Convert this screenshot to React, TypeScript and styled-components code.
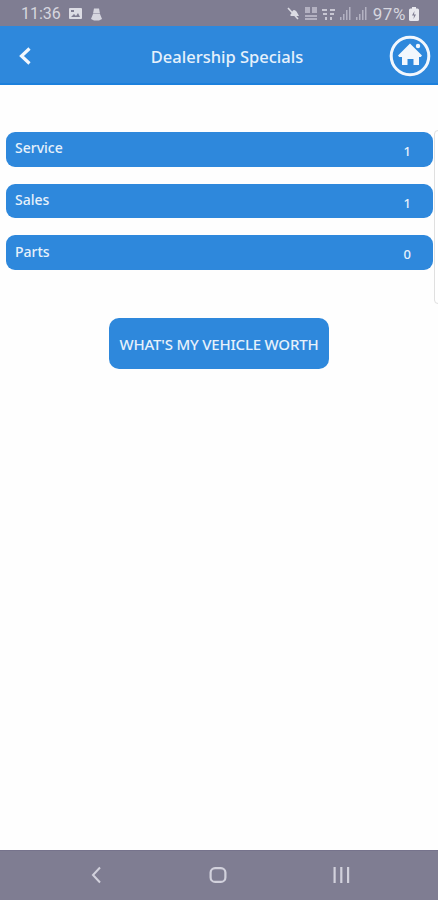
import React from 'react'
import styled, { createGlobalStyle } from 'styled-components'

const GlobalStyle = createGlobalStyle`
  html, body {
    margin: 0;
    padding: 0;
    background: #ffffff;
    font-family: "Noto Sans", "Open Sans", sans-serif;
  }
`

const Screen = styled.div`
  position: relative;
  width: 438px;
  height: 900px;
  display: flex;
  flex-direction: column;
  overflow: hidden;
  background: #fefefe;
`

const StatusBar = styled.div`
  height: 26px;
  flex: none;
  display: flex;
  align-items: center;
  justify-content: space-between;
  padding: 1px 19px 0 21px;
  box-sizing: border-box;
  background: #7f7d92;
  color: #d6d6df;
  font-family: "Roboto", sans-serif;
  font-size: 16px;
`

const StatusGroup = styled.div`
  display: flex;
  align-items: center;
  gap: ${({ $gap }: { $gap: number }) => $gap}px;
`

const Percent = styled.span`
  font-size: 17px;
  letter-spacing: 0.6px;
  margin: 0 -2px 0 1px;
`

const Header = styled.header`
  height: 59px;
  flex: none;
  box-sizing: border-box;
  display: flex;
  align-items: center;
  justify-content: space-between;
  padding: 3px 7px 0 18px;
  background: #2e88dc;
  border-bottom: 2px solid #1c80dc;
`

const Title = styled.h1`
  margin: 0 0 0 33px;
  color: #e6f1fb;
  font-size: 16.5px;
  font-weight: 500;
`

const Content = styled.main`
  flex: 1;
  display: flex;
  flex-direction: column;
  padding: 47px 5px 0 6px;
`

const CountList = styled.div`
  display: flex;
  flex-direction: column;
  gap: 17px;
`

const CountRow = styled.div`
  height: 34.7px;
  box-sizing: border-box;
  display: flex;
  align-items: center;
  justify-content: space-between;
  padding: 0 22px 0 9px;
  border-radius: 9px;
  background: #2e88dc;
  color: #e6f1fb;
  font-size: 14px;
  font-weight: 500;
`

const Count = styled.span`
  font-size: 13px;
  padding-top: 3px;
`

const RowLabel = styled.span`
  padding-bottom: 3px;
`

const SidePanel = styled.div`
  position: absolute;
  top: 130px;
  left: 434px;
  width: 12px;
  height: 174px;
  box-sizing: border-box;
  border: 1px solid #e0e0e0;
  border-radius: 4px;
  background: #ffffff;
`

const WorthButton = styled.button`
  align-self: center;
  width: 220px;
  height: 51px;
  margin: 48px 1px 0 0;
  padding: 0;
  border: none;
  border-radius: 10px;
  background: #2e88dc;
  color: #e6f1fb;
  font-family: inherit;
  font-size: 15px;
  font-weight: 500;
  letter-spacing: -0.2px;
`

const NavBar = styled.nav`
  height: 50px;
  flex: none;
  display: flex;
  align-items: center;
  justify-content: space-between;
  padding: 0 88px 2px 90px;
  background: #7f7d92;
  border-top: 1px solid #76738c;
  box-sizing: border-box;
`

const ImageIcon = () => (
  <svg width="13" height="11" viewBox="0 0 13 11">
    <rect width="13" height="11" rx="1" fill="#dcdce4" />
    <rect x="2" y="2" width="3" height="2" fill="#7f7d92" />
    <path d="M2 9l3-3 2 2 2-3 2 4z" fill="#7f7d92" />
  </svg>
)

const BellIcon = () => (
  <svg width="13" height="14" viewBox="0 0 13 14">
    <path d="M4 1.500h5l1 5H3z" fill="#d6d6df" />
    <path d="M1 12l2-5h7l2 5-3 1.500H4z" fill="#d6d6df" />
  </svg>
)

const MuteIcon = () => (
  <svg width="13" height="13" viewBox="0 0 13 13">
    <path d="M3 8c2-1 2-5 4-5s3 2 5 6H4z" fill="#dcdce4" />
    <path d="M1 1l10 11" stroke="#dcdce4" strokeWidth="1.600" />
  </svg>
)

const DataIcon = () => (
  <svg width="12" height="15" viewBox="0 0 12 15" fill="#c4c3d0">
    <rect x="0" y="1" width="5" height="6" opacity="0.75" />
    <rect x="7" y="1" width="5" height="6" opacity="0.75" />
    <rect x="0" y="9" width="12" height="2" opacity="0.75" />
    <rect x="0" y="12" width="12" height="2" opacity="0.75" />
  </svg>
)

const WifiIcon = () => (
  <svg width="13" height="14" viewBox="0 0 13 14" fill="#c8c7d3">
    <rect x="0" y="2" width="5" height="2" />
    <rect x="8" y="2" width="5" height="2" />
    <rect x="1" y="6" width="4" height="2" />
    <rect x="8" y="6" width="4" height="2" />
    <rect x="3" y="10" width="2" height="3" />
    <rect x="8" y="10" width="2" height="3" />
  </svg>
)

const SignalIcon = () => (
  <svg width="11" height="13" viewBox="0 0 11 13" fill="#b3b2c2">
    <rect x="0" y="10" width="1.500" height="3" />
    <rect x="3" y="7" width="1.500" height="6" />
    <rect x="6" y="3" width="1.500" height="10" />
    <rect x="9" y="0" width="1.500" height="13" />
  </svg>
)

const BatteryIcon = () => (
  <svg width="10" height="14" viewBox="0 0 10 14">
    <rect x="3" y="0" width="4" height="2" fill="#e8e8ee" />
    <rect x="0" y="1.500" width="10" height="12.500" rx="1.500" fill="#e8e8ee" />
    <path d="M5.500 4L3 8.500h2L4.500 12 7 7.500H5z" fill="#7f7d92" />
  </svg>
)

const BackChevron = () => (
  <svg width="14" height="20" viewBox="0 0 14 20" fill="none">
    <path d="M11.500 2.500L3.500 10l8 7.500" stroke="#f2f7fd" strokeWidth="3.200" />
  </svg>
)

const HomeBadge = () => (
  <svg width="42" height="42" viewBox="0 0 42 42">
    <circle cx="21" cy="21" r="18.800" fill="none" stroke="#f2f7fd" strokeWidth="3" />
    <circle cx="29" cy="11" r="2.200" fill="#f2f7fd" />
    <path
      d="M21 8.500L33 20.500l-1.200 1.500H30V30H24.500V24H18.500V30H13V22H10.200L9 20.500z"
      fill="#f2f7fd"
    />
  </svg>
)

const NavBack = () => (
  <svg width="12" height="18" viewBox="0 0 12 18" fill="none">
    <path d="M10 1.500L3 9l7 7.500" stroke="#d2d1dc" strokeWidth="2" />
  </svg>
)

const NavHome = () => (
  <svg width="18" height="16" viewBox="0 0 18 16" fill="none">
    <rect x="1.600" y="1.100" width="14.800" height="13.800" rx="4.500" stroke="#d2d1dc" strokeWidth="2.200" />
  </svg>
)

const NavRecents = () => (
  <svg width="17" height="16" viewBox="0 0 17 16" fill="#d2d1dc">
    <rect x="0.500" y="0" width="2.200" height="16" />
    <rect x="7.200" y="0" width="2.200" height="16" />
    <rect x="14" y="0" width="2.200" height="16" />
  </svg>
)

const specials = [
  { label: 'Service', count: 1 },
  { label: 'Sales', count: 1 },
  { label: 'Parts', count: 0 },
]

const App: React.FC = () => {
  return (
    <Screen>
      <GlobalStyle />
      <StatusBar>
        <StatusGroup $gap={8}>
          <span>11:36</span>
          <ImageIcon />
          <BellIcon />
        </StatusGroup>
        <StatusGroup $gap={5}>
          <MuteIcon />
          <DataIcon />
          <WifiIcon />
          <SignalIcon />
          <SignalIcon />
          <Percent>97%</Percent>
          <BatteryIcon />
        </StatusGroup>
      </StatusBar>
      <Header>
        <BackChevron />
        <Title>Dealership Specials</Title>
        <HomeBadge />
      </Header>
      <Content>
        <CountList>
          {specials.map((item) => (
            <CountRow key={item.label}>
              <RowLabel>{item.label}</RowLabel>
              <Count>{item.count}</Count>
            </CountRow>
          ))}
        </CountList>
        <WorthButton>WHAT'S MY VEHICLE WORTH</WorthButton>
      </Content>
      <SidePanel />
      <NavBar>
        <NavBack />
        <NavHome />
        <NavRecents />
      </NavBar>
    </Screen>
  )
}

export default App
